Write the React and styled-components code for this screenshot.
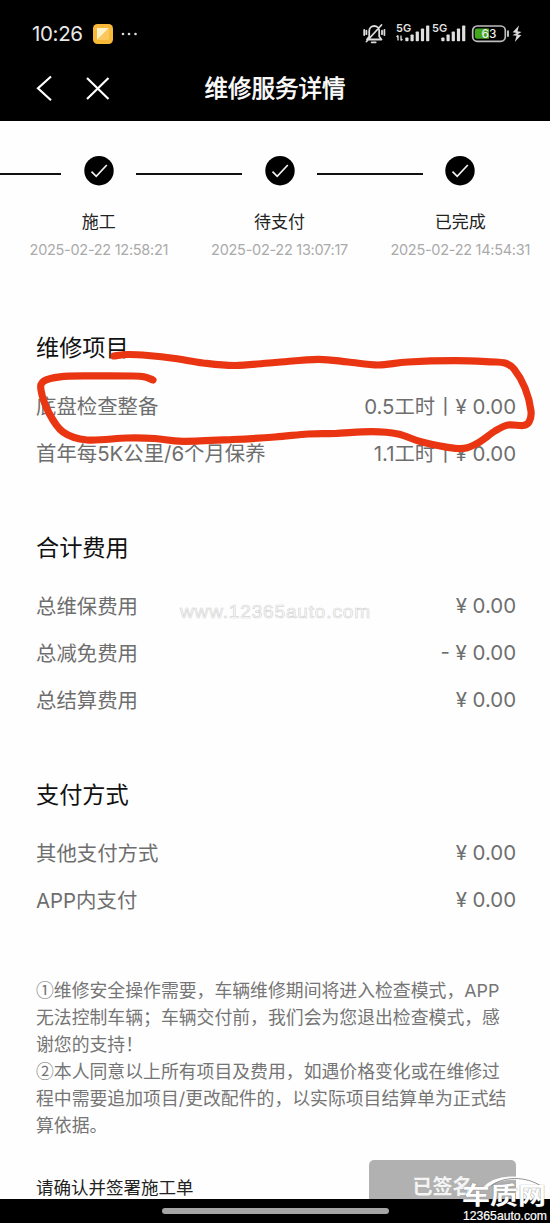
import React from 'react';
import styled, { createGlobalStyle } from 'styled-components';

const GlobalStyle = createGlobalStyle`
  * {
    box-sizing: border-box;
  }

  body {
    margin: 0;
    background: #fefefe;
    font-family: Inter, 'Noto Sans CJK SC', sans-serif;
  }
`;

const Phone = styled.div`
  position: relative;
  display: flex;
  flex-direction: column;
  width: 550px;
  height: 1223px;
  overflow: hidden;
  background: #fefefe;
`;

const Header = styled.header`
  flex: none;
  height: 121px;
  background: #000;
  color: #fff;
`;

const StatusBar = styled.div`
  display: flex;
  align-items: center;
  height: 67px;
  padding: 0 27px 0 32px;
`;

const Clock = styled.span`
  width: 61px;
  font-size: 20.5px;
  letter-spacing: -0.35px;
  color: #e8e8e8;
  white-space: nowrap;
`;

const StatusIcons = styled.svg`
  margin-left: auto;
`;

const NavBar = styled.div`
  display: grid;
  grid-template-columns: 120px 1fr 120px;
  align-items: center;
  height: 43px;
`;

const NavButtons = styled.div`
  display: flex;
  padding-left: 34px;
`;

const Title = styled.h1`
  margin: 0;
  font-size: 23.5px;
  font-weight: 400;
  line-height: 34px;
  text-align: center;
  -webkit-text-stroke: 0.6px #fff;
`;

const Track = styled.div`
  display: flex;
  flex: none;
  align-items: center;
  height: 30px;
  margin-top: 35px;
`;

const Line = styled.div`
  flex: none;
  width: ${props => props.width}px;
  height: 2px;
  margin-top: 6px;
  background: #111;
`;

const Mark = styled.svg`
  flex: none;
  width: 30px;
  height: 30px;
  margin: 0 22.6px;
`;

const StepLabels = styled.div`
  display: grid;
  flex: none;
  grid-template-columns: repeat(3, 180.7px);
  height: 54px;
  margin: 22.5px 0 0 8.5px;
`;

const StepLabel = styled.div`
  display: flex;
  flex-direction: column;
  align-items: center;
  font-size: 17px;
  line-height: 26px;
  color: #222;
  white-space: nowrap;

  time {
    margin-top: 2px;
    font-size: 14.5px;
    letter-spacing: -0.28px;
    color: #aaa;
  }
`;

const Content = styled.main`
  display: flex;
  flex: none;
  flex-direction: column;
  padding: 62.5px 34px 0 36px;
`;

const Section = styled.section`
  margin-bottom: 49.5px;
`;

const Heading = styled.h2`
  margin: 0 0 10.5px;
  font-size: 23.2px;
  font-weight: 400;
  line-height: 46px;
  color: #111;
`;

const Row = styled.div`
  display: flex;
  align-items: center;
  justify-content: space-between;
  height: 47px;
  font-size: 20.4px;
  color: #6e6e6e;
  white-space: nowrap;
`;

const Amount = styled.span`
  letter-spacing: 0;
`;

const Notes = styled.div`
  margin-top: 5px;
  font-size: 17.85px;
  line-height: 27px;
  color: #757575;
  white-space: nowrap;

  p {
    height: 81px;
    margin: 0;
  }
`;

const Circled = styled.span`
  font-family: 'Noto Sans CJK SC', sans-serif;
  line-height: 0;
`;

const Confirm = styled.footer`
  display: flex;
  flex: 1;
  align-items: flex-start;
  justify-content: space-between;
  min-height: 0;
  margin: 0 34px 0 36px;
  padding-top: 20.5px;
  overflow: hidden;
  font-size: 17.5px;
  line-height: 55px;
  color: #222;
`;

const SignedButton = styled.button`
  width: 147px;
  height: 55px;
  padding: 0;
  border: 0;
  border-radius: 5px;
  background: #b1b1b1;
  color: #f4f4f4;
  font: 700 20px/55px Inter, 'Noto Sans CJK SC', sans-serif;
`;

const HomeBar = styled.div`
  display: flex;
  flex: none;
  justify-content: center;
  height: 24px;
  padding-top: 9px;
  background: #000;

  &::after {
    content: '';
    width: 227px;
    height: 6px;
    border-radius: 3px;
    background: #a5a5a5;
  }
`;

const Scribble = styled.svg`
  position: absolute;
  top: 0;
  left: 0;
  pointer-events: none;
`;

const SiteMark = styled.div`
  position: absolute;
  top: 600px;
  left: 180px;
  font-family: 'Liberation Sans', sans-serif;
  font-size: 19px;
  line-height: 24px;
  letter-spacing: 0.85px;
  color: #fff;
  -webkit-text-stroke: 0.7px #d6d6d6;
`;

const CornerLogo = styled.div`
  position: absolute;
  right: 0;
  bottom: 0;
  width: 90px;
  height: 48px;
  color: #fff;
  white-space: nowrap;

  svg {
    position: absolute;
    top: 0;
    left: 0;
  }

  strong {
    position: absolute;
    top: 8px;
    left: 2px;
    font-size: 28px;
    font-weight: 700;
    line-height: 26px;
    text-shadow: 0 0 1px #555;
    transform: scaleY(0.84);
  }

  small {
    position: absolute;
    top: 35px;
    left: 3px;
    font: 12.2px/12px 'Liberation Sans', sans-serif;
    -webkit-text-stroke: 0.2px #fff;
  }
`;

const steps = [
  { name: '施工', time: '2025-02-22 12:58:21' },
  { name: '待支付', time: '2025-02-22 13:07:17' },
  { name: '已完成', time: '2025-02-22 14:54:31' }
];

const sections = [
  {
    title: '维修项目',
    rows: [['底盘检查整备', '0.5工时丨¥ 0.00'], ['首年每5K公里/6个月保养', '1.1工时丨¥ 0.00']]
  },
  {
    title: '合计费用',
    rows: [['总维保费用', '¥ 0.00'], ['总减免费用', '- ¥ 0.00'], ['总结算费用', '¥ 0.00']]
  },
  {
    title: '支付方式',
    rows: [['其他支付方式', '¥ 0.00'], ['APP内支付', '¥ 0.00']]
  }
];

const strokePoints = [
  [114, 356], [128, 354.5], [148, 355.5], [175, 358.5], [203, 363], [235, 365.5], [275, 362.5],
  [318, 359.3], [348, 362], [378, 365], [408, 362], [455, 360.7], [490, 361.8], [505, 363],
  [514, 369], [525, 388], [531, 411], [529, 422], [523, 425.5], [508, 425], [495, 431], [476, 444],
  [458, 448.5], [422, 442], [398, 434], [372, 431.7], [335, 433.5], [308, 434], [275, 437],
  [233, 439.5], [183, 441.3], [155, 438.5], [127, 438], [87, 440], [63, 432], [49, 413],
  [41, 390], [44, 381], [60, 376.8], [90, 375.9], [133, 376], [145, 377], [153, 380]
];

// Catmull-Rom through the points, as cubic segments
const smoothPath = pts =>
  pts.slice(1).reduce((d, p, i) => {
    const a = pts[i - 1] || pts[i];
    const b = pts[i];
    const c = pts[i + 2] || p;
    return `${d} C${b[0] + (p[0] - a[0]) / 6} ${b[1] + (p[1] - a[1]) / 6} ${p[0] - (c[0] - b[0]) / 6} ${
      p[1] - (c[1] - b[1]) / 6
    } ${p[0]} ${p[1]}`;
  }, `M${pts[0][0]} ${pts[0][1]}`);

const Signal = ({ x, arrows }) => (
  <g transform={`translate(${x} 0)`} fill="#e0e0e0">
    <text x="0" y="13.3" fontSize="11" fontWeight="600" fontFamily="Inter, sans-serif">
      5G
    </text>
    {arrows && (
      <path d="M2 16.5v5M0.6 18l1.4-1.7M5 16.5v5M6.4 20L5 21.7" stroke="#e0e0e0" strokeWidth="1.3" fill="none" />
    )}
    {[0, 1, 2, 3, 4].map(i => (
      <rect key={i} x={9.3 + i * 5.2} y={18.5 - i * 3} width="3.2" height={3.7 + i * 3} rx="0.8" />
    ))}
  </g>
);

const StatusRight = () => (
  <StatusIcons width="160" height="30" viewBox="0 0 160 30">
    <g fill="none" stroke="#dcdcdc" strokeWidth="1.8" strokeLinecap="round" strokeLinejoin="round">
      <path d="M4 20.5h14.5l-2.3-3V12a5 5 0 0 0-10 0v5.5zM8.7 23.3h4M3.5 22.5L18.5 6M1.2 11v5M3.4 11.7v3.5M19 11.7v3.5M21.4 11v5" />
    </g>
    <Signal x={33} arrows />
    <Signal x={69} />
    <rect x="109.7" y="7" width="32.6" height="15.3" rx="4.5" fill="none" stroke="#bdbdbd" strokeWidth="1.7" />
    <path d="M114 9.5h12v10.3h-12a2.2 2.2 0 0 1-2.2-2.2v-5.9a2.2 2.2 0 0 1 2.2-2.2z" fill="#42a91c" />
    <path d="M145 12.2v4.8" stroke="#bdbdbd" strokeWidth="2" strokeLinecap="round" />
    <text x="126" y="18.8" textAnchor="middle" fontSize="11.8" fontWeight="500" fill="#eee" fontFamily="Inter, sans-serif">
      63
    </text>
    <path d="M156 6.5l-6.3 6.7 4 .8-4.2 2.3 4 .5-1.7 6.2 6.5-7-4-.6 4.200-2.500-4-.600z" fill="#dcdcdc" />
  </StatusIcons>
);

export default function App() {
  return (
    <Phone>
      <GlobalStyle />
      <Header>
        <StatusBar>
          <Clock>10:26</Clock>
          <svg width="46" height="20" viewBox="0 0 46 20">
            <rect width="20" height="20" rx="4.5" fill="#f9b938" />
            <path d="M4 4h12L4 16z" fill="#fff2c9" />
            <path d="M16 4v10.5L14.5 16H4z" fill="#fcc75c" />
            <g fill="#ddd">
              <circle cx="30" cy="10" r="1.3" />
              <circle cx="36" cy="10" r="1.3" />
              <circle cx="42.5" cy="10" r="1.3" />
            </g>
          </svg>
          <StatusRight />
        </StatusBar>
        <NavBar>
          <NavButtons>
            <svg width="80" height="30" viewBox="0 0 80 30" fill="none" stroke="#fff" strokeWidth="2.2">
              <path d="M17 2.5L4 14.3l13 12M53 4l21.5 21M74.5 4L53 25" />
            </svg>
          </NavButtons>
          <Title>维修服务详情</Title>
        </NavBar>
      </Header>

      <Track>
        {steps.map((step, i) => (
          <React.Fragment key={step.name}>
            <Line width={i === 0 ? 61.3 : 105.5} />
            <Mark viewBox="0 0 30 30">
              <circle cx="15" cy="14.7" r="14.7" fill="#000" />
              <path d="M7.5 15.7l4.7 4.6L22.8 9" fill="none" stroke="#f2f2f2" strokeWidth="1.7" />
            </Mark>
          </React.Fragment>
        ))}
      </Track>
      <StepLabels>
        {steps.map(step => (
          <StepLabel key={step.name}>
            <span>{step.name}</span>
            <time>{step.time}</time>
          </StepLabel>
        ))}
      </StepLabels>

      <Content>
        {sections.map(section => (
          <Section key={section.title}>
            <Heading>{section.title}</Heading>
            {section.rows.map(([label, amount]) => (
              <Row key={label}>
                <span>{label}</span>
                <Amount>{amount}</Amount>
              </Row>
            ))}
          </Section>
        ))}
        <Notes>
          <p>
            <Circled>①</Circled>维修安全操作需要，车辆维修期间将进入检查模式，APP
            <br />
            无法控制车辆；车辆交付前，我们会为您退出检查模式，感
            <br />
            谢您的支持！
          </p>
          <p>
            <Circled>②</Circled>本人同意以上所有项目及费用，如遇价格变化或在维修过
            <br />
            程中需要追加项目/更改配件的，以实际项目结算单为正式结
            <br />
            算依据。
          </p>
        </Notes>
      </Content>
      <Confirm>
        <span>请确认并签署施工单</span>
        <SignedButton>已签名</SignedButton>
      </Confirm>
      <HomeBar />

      <SiteMark>www.12365auto.com</SiteMark>
      <Scribble width="550" height="1223" viewBox="0 0 550 1223">
        <path
          d={smoothPath(strokePoints)}
          fill="none"
          stroke="#ea3512"
          strokeWidth="7.2"
          strokeLinecap="round"
          strokeLinejoin="round"
        />
      </Scribble>
      <CornerLogo>
        <svg width="90" height="48" viewBox="0 0 90 48" fill="none">
          <path d="M17 13.5h7C36 1 62-1 86 11.5" stroke="#fff" strokeWidth="3.2" />
          <path d="M31 11C43 1 66 1 81 11" stroke="#777" strokeWidth="0.8" />
        </svg>
        <strong>车质网</strong>
        <small>12365auto.com</small>
      </CornerLogo>
    </Phone>
  );
}
